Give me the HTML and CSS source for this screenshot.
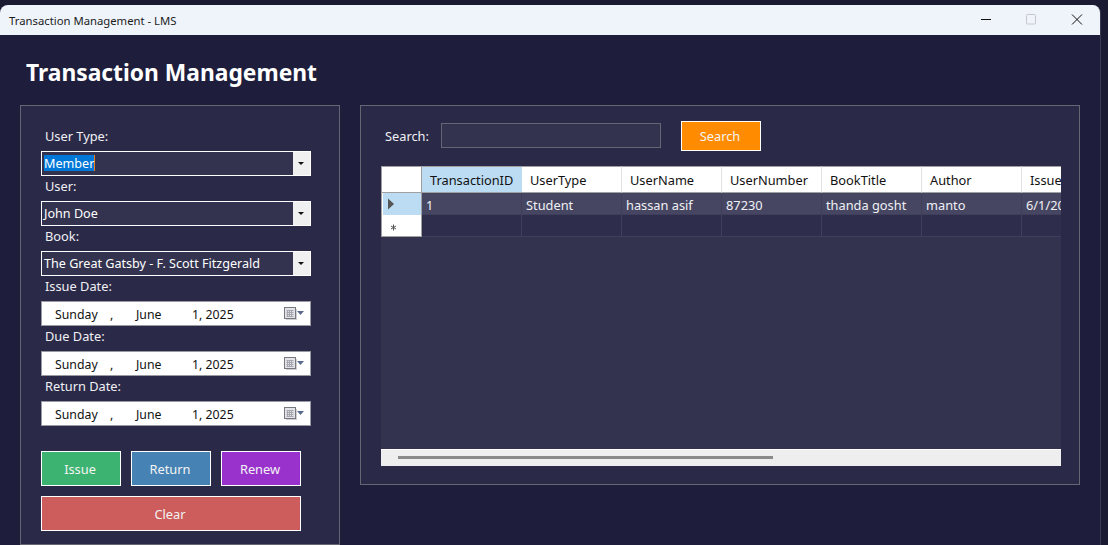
FILE: index.html
```html
<!DOCTYPE html>
<html>
<head>
    <meta charset="utf-8"/>
    <title>Transaction Management - LMS</title>
    <link rel="stylesheet" href="styles.css">
</head>
<body>
<div class="window">
    <div class="titlebar">
        <span class="title">Transaction Management - LMS</span>
        <div class="controls">
            <svg class="ctl" width="46" height="30" viewBox="0 0 46 30"><path d="M19 14.500h10" stroke="#111" fill="none"/></svg>
            <svg class="ctl" width="46" height="30" viewBox="0 0 46 30"><rect x="18.500" y="9.500" width="9" height="9.500" rx="1" stroke="#c4c6ca" fill="none"/></svg>
            <svg class="ctl" width="46" height="30" viewBox="0 0 46 30"><path d="M18 9.500l10 10M28 9.500l-10 10" stroke="#111" fill="none"/></svg>
        </div>
    </div>
    <div class="content">
        <h1 class="heading">Transaction Management</h1>
        <div class="columns">
            <div class="panel form-panel">
                <div class="field-label">User Type:</div>
                <div class="combo">
                    <span class="combo-text"><span class="selected">Member</span></span>
                    <span class="combo-btn"></span>
                </div>
                <div class="field-label">User:</div>
                <div class="combo">
                    <span class="combo-text">John Doe</span>
                    <span class="combo-btn"></span>
                </div>
                <div class="field-label">Book:</div>
                <div class="combo">
                    <span class="combo-text">The Great Gatsby - F. Scott Fitzgerald</span>
                    <span class="combo-btn"></span>
                </div>
                <div class="field-label">Issue Date:</div>
                <div class="date">
                    <span class="d-day">Sunday</span><span class="d-comma">,</span><span class="d-month">June</span><span class="d-year">1, 2025</span>
                    <svg class="cal" width="21" height="14" viewBox="0 0 21 14"><path d="M2 12.500h11M12.500 2v11" stroke="#d0d0d4" fill="none"/><rect x="0.500" y="0.500" width="11" height="11" fill="#e4e4e8" stroke="#77777f"/><path d="M2.500 3.500h7M2.500 5.500h7M2.500 7.500h7M2.500 9.500h7M3.500 3v7M5.500 3v7M7.500 3v7" stroke="#a6a6b0" fill="none"/><path d="M13 4h7l-3.500 4z" fill="#5a6a8c"/></svg>
                </div>
                <div class="field-label">Due Date:</div>
                <div class="date">
                    <span class="d-day">Sunday</span><span class="d-comma">,</span><span class="d-month">June</span><span class="d-year">1, 2025</span>
                    <svg class="cal" width="21" height="14" viewBox="0 0 21 14"><path d="M2 12.500h11M12.500 2v11" stroke="#d0d0d4" fill="none"/><rect x="0.500" y="0.500" width="11" height="11" fill="#e4e4e8" stroke="#77777f"/><path d="M2.500 3.500h7M2.500 5.500h7M2.500 7.500h7M2.500 9.500h7M3.500 3v7M5.500 3v7M7.500 3v7" stroke="#a6a6b0" fill="none"/><path d="M13 4h7l-3.500 4z" fill="#5a6a8c"/></svg>
                </div>
                <div class="field-label">Return Date:</div>
                <div class="date">
                    <span class="d-day">Sunday</span><span class="d-comma">,</span><span class="d-month">June</span><span class="d-year">1, 2025</span>
                    <svg class="cal" width="21" height="14" viewBox="0 0 21 14"><path d="M2 12.500h11M12.500 2v11" stroke="#d0d0d4" fill="none"/><rect x="0.500" y="0.500" width="11" height="11" fill="#e4e4e8" stroke="#77777f"/><path d="M2.500 3.500h7M2.500 5.500h7M2.500 7.500h7M2.500 9.500h7M3.500 3v7M5.500 3v7M7.500 3v7" stroke="#a6a6b0" fill="none"/><path d="M13 4h7l-3.500 4z" fill="#5a6a8c"/></svg>
                </div>
                <div class="actions">
                    <div class="btn issue">Issue</div>
                    <div class="btn return">Return</div>
                    <div class="btn renew">Renew</div>
                    <div class="btn clear">Clear</div>
                </div>
            </div>
            <div class="panel grid-panel">
                <div class="search-row">
                    <span class="search-label">Search:</span>
                    <div class="search-input"></div>
                    <div class="btn search">Search</div>
                </div>
                <div class="grid">
                    <div class="grid-body">
                        <table>
                            <thead>
                                <tr>
                                    <th class="corner"></th>
                                    <th class="active">TransactionID</th>
                                    <th>UserType</th>
                                    <th>UserName</th>
                                    <th>UserNumber</th>
                                    <th>BookTitle</th>
                                    <th>Author</th>
                                    <th>IssueDate</th>
                                </tr>
                            </thead>
                            <tbody>
                                <tr class="row-current">
                                    <td class="row-head current"><svg width="8" height="12" viewBox="0 0 8 12"><path d="M1 0.500l6 5.500-6 5.500z" fill="#555"/></svg></td>
                                    <td>1</td>
                                    <td>Student</td>
                                    <td>hassan asif</td>
                                    <td>87230</td>
                                    <td>thanda gosht</td>
                                    <td>manto</td>
                                    <td>6/1/2025</td>
                                </tr>
                                <tr class="row-new">
                                    <td class="row-head"><svg class="star" width="7" height="7" viewBox="0 0 7 7"><path d="M3.500 0.500v6M1 2l5 3M6 2l-5 3" stroke="#555" fill="none"/></svg></td>
                                    <td></td><td></td><td></td><td></td><td></td><td></td><td></td>
                                </tr>
                            </tbody>
                        </table>
                    </div>
                    <div class="hscroll"><div class="thumb"></div></div>
                </div>
            </div>
        </div>
    </div>
</div>
</body>
</html>
```

FILE: styles.css
```css
html, body {
    margin: 0;
    height: 100%;
}

body {
    background: #1a1a33;
    overflow: hidden;
    font-family: "Noto Sans", "Open Sans", sans-serif;
    font-size: 12.8px;
}

.window {
    width: 1101px;
    height: 540px;
    margin-top: 5px;
    background: #1e1e3c;
    border-right: 1px solid #3a3a52;
    box-sizing: border-box;
    border-radius: 8px 8px 0 0;
    overflow: hidden;
    display: flex;
    flex-direction: column;
}

.titlebar {
    height: 30px;
    flex: none;
    background: #eff4fb;
    display: flex;
    justify-content: space-between;
    align-items: center;
    padding-left: 9px;
}

.title {
    font-size: 11.3px;
    color: #1c1c1c;
}

.controls {
    display: flex;
}

.ctl {
    display: block;
}

.content {
    flex: 1;
    padding: 0 20px;
}

.heading {
    margin: 0;
    height: 70px;
    padding-left: 6px;
    font-size: 22.8px;
    line-height: 76px;
    font-weight: 700;
    color: #fff;
}

.columns {
    display: flex;
    gap: 20px;
    align-items: flex-start;
}

.panel {
    flex: none;
    box-sizing: border-box;
    background: #2a2a48;
    border: 1px solid #666672;
}

.form-panel {
    width: 320px;
    height: 440px;
    padding: 20px;
}

.grid-panel {
    width: 720px;
    height: 380px;
    padding: 15px 18px 18px 20px;
}

.field-label {
    height: 25px;
    line-height: 20px;
    padding-left: 4px;
    color: #f0f0f4;
}

.combo {
    box-sizing: border-box;
    width: 270px;
    height: 25px;
    display: flex;
    border: 1px solid #fff;
    background: #33334f;
    color: #fff;
}

.combo-text {
    flex: 1;
    padding-left: 2px;
    font-size: 12.6px;
    line-height: 23px;
    white-space: nowrap;
}

.selected {
    display: block;
    box-sizing: border-box;
    width: 51px;
    height: 16px;
    margin-top: 3px;
    line-height: 17px;
    white-space: nowrap;
    background: #0078d7;
    border-right: 1px solid #f08020;
}

.combo-btn {
    width: 17px;
    background: #f0f0f0;
    position: relative;
}

.combo-btn::after {
    content: "";
    position: absolute;
    left: 5px;
    top: 10px;
    border: 3px solid transparent;
    border-top: 3px solid #111;
    border-bottom: 0;
}

.date {
    box-sizing: border-box;
    width: 270px;
    height: 25px;
    display: flex;
    align-items: center;
    background: #fff;
    border: 1px solid #9a9aa2;
    padding-left: 13px;
    padding-top: 2px;
    font-size: 12.3px;
    color: #111;
}

.d-day {
    width: 55px;
}

.d-comma {
    width: 26px;
}

.d-month {
    width: 56px;
}

.d-year {
    flex: 1;
}

.cal {
    margin: -2px 5px 0 0;
}

.actions {
    display: grid;
    grid-template-columns: repeat(3, 80px);
    gap: 10px;
    margin-top: 25px;
}

.btn {
    box-sizing: border-box;
    height: 35px;
    padding-right: 2px;
    border: 1px solid #fff;
    color: #f4f4f4;
    text-align: center;
    line-height: 35px;
}

.issue {
    background: #3cb371;
}

.return {
    background: #4682b4;
}

.renew {
    background: #9932cc;
}

.clear {
    grid-column: 1 / 4;
    background: #cd5c5c;
}

.search-row {
    display: flex;
    align-items: flex-start;
    height: 30px;
}

.search-label {
    width: 60px;
    padding-left: 4px;
    box-sizing: border-box;
    flex: none;
    line-height: 30px;
    color: #f0f0f4;
}

.search-input {
    box-sizing: border-box;
    width: 220px;
    height: 25px;
    margin-top: 2px;
    background: #33334f;
    border: 1px solid #666672;
}

.search {
    width: 80px;
    height: 30px;
    line-height: 28px;
    margin-left: 20px;
    background: #ff8c00;
}

.grid {
    width: 680px;
    height: 300px;
    margin-top: 15px;
    background: #33334f;
    display: flex;
    flex-direction: column;
}

.grid-body {
    flex: 1;
    overflow: hidden;
}

table {
    border-collapse: separate;
    border-spacing: 0;
    table-layout: fixed;
    width: 741px;
}

th {
    box-sizing: border-box;
    width: 100px;
    height: 27px;
    padding: 0 0 0 8px;
    background: #fff;
    border-top: 1px solid #a0a0a0;
    border-bottom: 1px solid #a0a0a0;
    border-right: 1px solid #e2e2e2;
    color: #111;
    font-weight: 400;
    text-align: left;
    white-space: nowrap;
    overflow: hidden;
}

th.corner {
    width: 41px;
    border-left: 1px solid #a0a0a0;
    border-right: 1px solid #a0a0a0;
}

th.active {
    background: #bcdcf4;
    border-right: 0;
}

td {
    box-sizing: border-box;
    height: 22px;
    padding: 3px 0 0 4px;
    border-right: 1px solid #3f3f5c;
    border-bottom: 1px solid #3f3f5c;
    color: #f0f0f4;
    white-space: nowrap;
    overflow: hidden;
}

.row-current td {
    background: #464663;
}

.row-new td {
    background: #2e2e4c;
}

.row-current td.row-head,
.row-new td.row-head {
    padding: 0 0 0 5px;
    background: #fff;
    border-left: 1px solid #a0a0a0;
    border-right: 1px solid #a0a0a0;
    border-bottom: 1px solid #a0a0a0;
}

.row-current td.current {
    background: #bcdcf4;
    border-bottom: 0;
    box-shadow: inset 1px 0 0 #fff;
}

.row-head svg {
    display: block;
}

.row-head svg.star {
    margin: 3px 0 0 3px;
}

.hscroll {
    height: 17px;
    flex: none;
    background: #eeeeee;
    border-top: 1px solid #fff;
    box-sizing: border-box;
    padding: 6px 0 0 17px;
}

.thumb {
    width: 375px;
    height: 3px;
    background: #8a8a8a;
}
```
